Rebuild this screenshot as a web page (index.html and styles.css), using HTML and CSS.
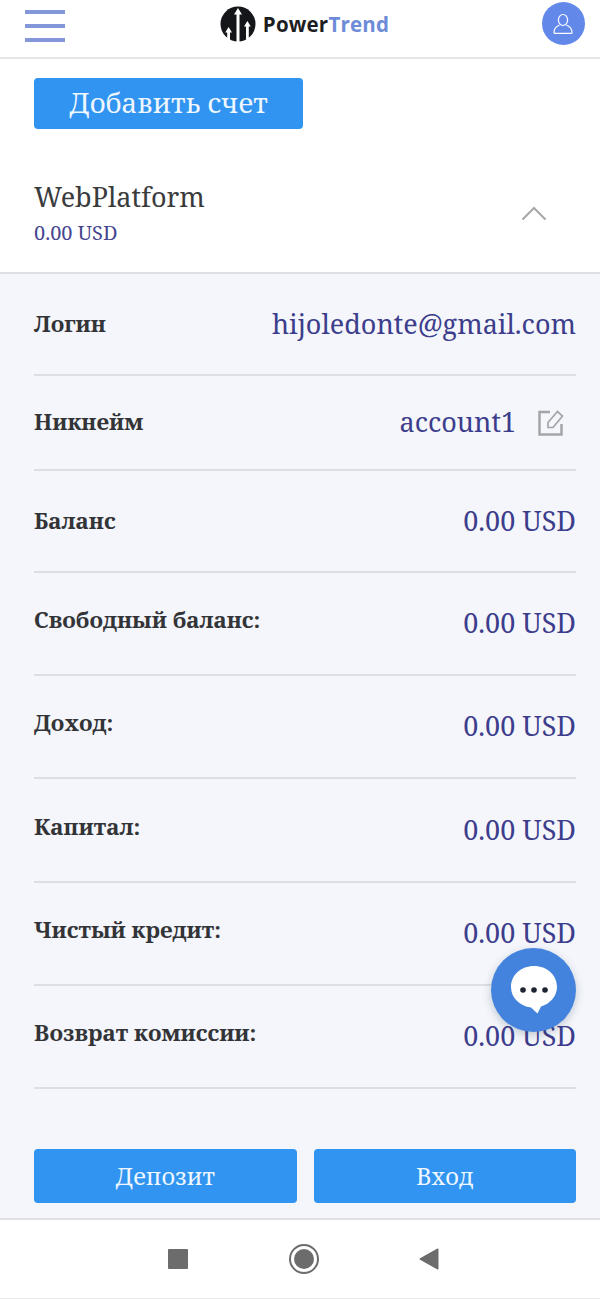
FILE: index.html
```html
<!DOCTYPE html>
<html lang="ru">
<head>
<meta charset="utf-8">
<title>PowerTrend</title>
<link rel="stylesheet" href="styles.css">
</head>
<body>
<div class="page">
  <header class="topbar">
    <div class="burger"><span></span><span></span><span></span></div>
    <div class="logo">
      <svg class="logo-mark" viewBox="0 0 36 36" width="36" height="36">
        <circle cx="18" cy="18" r="17.5" fill="#14161a"/>
        <path d="M18 2l-4 6.500h2.500v27.500h3V8.500h2.500zM8.600 21l-3.400 5.500h2v8h2.800v-8h2zM27.400 15l-3.400 5.500h2v12.500h2.800V20.500h2z" fill="#fff"/>
      </svg>
      <span class="brand">Power<span class="brand-accent">Trend</span></span>
    </div>
    <div class="avatar">
      <svg viewBox="0 0 24 24" width="24" height="24" fill="none" stroke="#fff" stroke-width="1.200">
        <ellipse cx="12" cy="8" rx="4.600" ry="5.500"/>
        <path d="M8.500 13c-2.800 1.200-5.500 3.800-5.500 7.500c0 .6.300.9.900.9h16.200c.6 0 .9-.3.900-.9c0-3.700-2.700-6.300-5.500-7.500"/>
      </svg>
    </div>
  </header>

  <div class="add-wrap"><button class="btn btn-add">Добавить счет</button></div>

  <section class="account-head">
    <div>
      <div class="account-name">WebPlatform</div>
      <div class="account-sum">0.00 USD</div>
    </div>
    <svg class="chevron" viewBox="0 0 26 16" width="26" height="16" fill="none" stroke="#a5a7a9" stroke-width="2"><path d="M1.500 14.500L13 3l11.500 11.500"/></svg>
  </section>

  <section class="panel">
    <div class="row row-short-a"><span class="label">Логин</span><span class="value">hijoledonte@gmail.com</span></div>
    <div class="row row-short"><span class="label">Никнейм</span>
      <span class="value value-edit">account1
        <svg class="edit" viewBox="0 0 28 28" width="28" height="28" fill="none" stroke="#a3a5a8" stroke-width="2.500"><path d="M13 4H2.500v22.500h22V16"/><path d="M11 19.500v-5L20.500 3.500l5 4.500L16 19.500z" stroke-width="1.700"/></svg>
      </span>
    </div>
    <div class="row row-short-a"><span class="label">Баланс</span><span class="value">0.00 USD</span></div>
    <div class="row"><span class="label label-up">Свободный баланс:</span><span class="value">0.00 USD</span></div>
    <div class="row"><span class="label label-up">Доход:</span><span class="value">0.00 USD</span></div>
    <div class="row row-tall"><span class="label label-up">Капитал:</span><span class="value">0.00 USD</span></div>
    <div class="row"><span class="label label-up">Чистый кредит:</span><span class="value">0.00 USD</span></div>
    <div class="row"><span class="label label-up">Возврат комиссии:</span><span class="value">0.00 USD</span></div>
    <div class="actions">
      <button class="btn btn-action">Депозит</button>
      <button class="btn btn-action">Вход</button>
    </div>
  </section>

  <nav class="sysnav">
    <span class="nav-square"></span>
    <span class="nav-circle"><span class="nav-dot"></span></span>
    <svg viewBox="0 0 20 22" width="20" height="22"><path d="M19.500 1.500v19a1 1 0 0 1-1.500.8L1 11.800a1 1 0 0 1 0-1.600L18 .7a1 1 0 0 1 1.500.8z" fill="#6c6c6c"/></svg>
  </nav>

  <div class="chat">
    <svg viewBox="0 0 48 50" width="48" height="50">
      <path d="M24 1C11 1 1 10 1 22c0 11 9 19 20 20.500l6.500 6 3.500-7C40 39 47 31 47 22C47 10 37 1 24 1z" fill="#fff"/>
      <circle cx="13" cy="25" r="2.800" fill="#1f2530"/><circle cx="24" cy="25" r="2.800" fill="#1f2530"/><circle cx="35" cy="25" r="2.800" fill="#1f2530"/>
    </svg>
  </div>
</div>
</body>
</html>
```
FILE: styles.css
```css
* { box-sizing: border-box; }
html, body { margin: 0; padding: 0; }
body { background: #fff; font-family: "Noto Serif", "DejaVu Serif Condensed", "DejaVu Serif", "Liberation Serif", serif; }
.page { position: relative; width: 600px; height: 1299px; overflow: hidden; display: flex; flex-direction: column; }

.topbar { height: 59px; flex: none; display: flex; align-items: center; justify-content: space-between; padding: 0 15px 7px 25px; border-bottom: 2px solid #e4e5e7; }
.burger { width: 40px; display: flex; flex-direction: column; gap: 10.500px; margin-top: 2px; }
.burger span { display: block; height: 3.500px; background: #8497da; }
.logo { display: flex; align-items: center; gap: 7px; margin-left: 2px; margin-bottom: 3px; }
.logo-mark { display: block; }
.brand { font-family: "Open Sans", sans-serif; font-weight: 700; font-size: 20.500px; color: #1d1e22; letter-spacing: .2px; }
.brand-accent { color: #6e8bd8; }
.avatar { width: 43px; height: 43px; border-radius: 50%; background: #6288ea; display: flex; align-items: center; justify-content: center; margin-bottom: 3px; }

.add-wrap { padding: 19px 34px 0; flex: none; }
.btn { border: 0; background: #3194f0; color: #eef7ff; font-family: inherit; border-radius: 4px; padding: 0; }
.btn-add { width: 269px; height: 51px; font-size: 27.500px; display: block; padding-bottom: 3px; }

.account-head { height: 145px; flex: none; display: flex; align-items: center; justify-content: space-between; padding: 24px 53px 0 34px; border-bottom: 2px solid #dcdee4; }
.account-name { font-size: 27px; color: #3a3b3d; line-height: 36px; }
.account-sum { font-size: 20px; color: #45468f; line-height: 26px; margin-top: 5px; }
.chevron { display: block; }

.panel { flex: 1; background: #f4f6fb; padding: 0 24px 0 34px; }
.row { height: 103px; display: flex; align-items: center; justify-content: space-between; padding-bottom: 2px; border-bottom: 2px solid #dcdee6; }
.row-short-a { height: 102px; }
.row-short { height: 95px; }
.row-tall { height: 104px; }
.label { font-weight: 700; font-size: 22.400px; color: #333437; }
.label-up { margin-bottom: 6px; }
.value { font-size: 27px; color: #3c3d8c; white-space: nowrap; }
.value-edit { display: flex; align-items: center; gap: 21px; padding-right: 11px; }
.edit { display: block; }

.actions { display: flex; gap: 17px; margin-top: 60px; }
.btn-action { flex: 1; height: 54px; font-size: 23.700px; }

.sysnav { height: 81px; flex: none; display: flex; align-items: center; justify-content: space-between; padding: 0 161px 0 168px; border-top: 2px solid #dfe0e2; border-bottom: 1px solid #e9e9ea; }
.nav-square { width: 20px; height: 20px; background: #6c6c6c; border-radius: 1px; }
.nav-circle { width: 30px; height: 30px; border-radius: 50%; border: 2.500px solid #6c6c6c; display: flex; align-items: center; justify-content: center; }
.nav-dot { width: 20px; height: 20px; border-radius: 50%; background: #6c6c6c; }

.chat { position: absolute; left: 491px; top: 948px; width: 85px; height: 84px; border-radius: 50%; background: #4383dd; box-shadow: 0 3px 8px rgba(40, 60, 90, .25); display: flex; align-items: center; justify-content: center; }
```
